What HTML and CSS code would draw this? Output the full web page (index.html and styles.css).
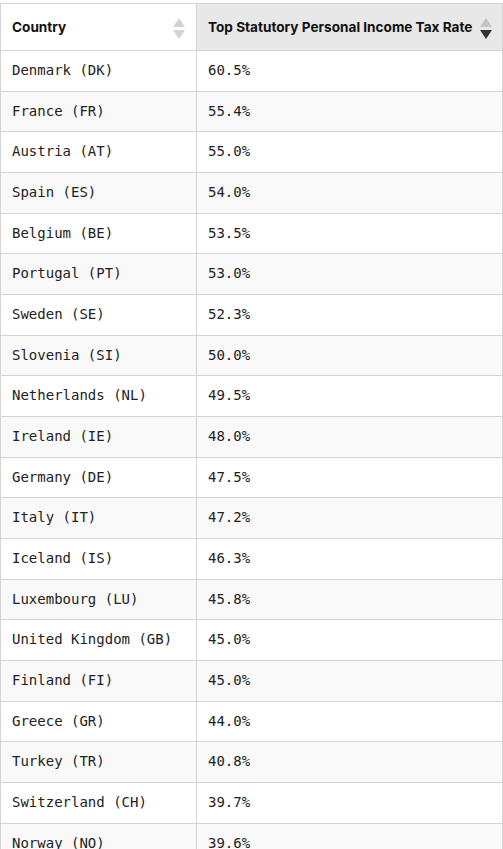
FILE: index.html
```html
<!DOCTYPE html>
<html lang="en">
<head>
  <meta charset="UTF-8">
  <meta name="viewport" content="width=device-width, initial-scale=1.0">
  <title>Top Statutory Personal Income Tax Rates</title>
  <link rel="stylesheet" href="styles.css">
</head>

<body>
  <table class="tax-table">
    <thead>
      <tr>
        <th class="sortable">
          <span>Country</span>
          <span class="sort-icon">
            <svg width="12" height="22" viewBox="0 0 12 22">
              <polygon points="6,0 12,9 0,9" fill="#d3d3d3"/>
              <polygon points="0,12 12,12 6,21" fill="#d3d3d3"/>
            </svg>
          </span>
        </th>
        <th class="sortable sorted">
          <span>Top Statutory Personal Income Tax Rate</span>
          <span class="sort-icon">
            <svg width="12" height="22" viewBox="0 0 12 22">
              <polygon points="6,0 12,9 0,9" fill="#c4c4c4"/>
              <polygon points="0,12 12,12 6,21" fill="#333333"/>
            </svg>
          </span>
        </th>
      </tr>
    </thead>
    <tbody>
      <tr><td>Denmark (DK)</td><td>60.5%</td></tr>
      <tr><td>France (FR)</td><td>55.4%</td></tr>
      <tr><td>Austria (AT)</td><td>55.0%</td></tr>
      <tr><td>Spain (ES)</td><td>54.0%</td></tr>
      <tr><td>Belgium (BE)</td><td>53.5%</td></tr>
      <tr><td>Portugal (PT)</td><td>53.0%</td></tr>
      <tr><td>Sweden (SE)</td><td>52.3%</td></tr>
      <tr><td>Slovenia (SI)</td><td>50.0%</td></tr>
      <tr><td>Netherlands (NL)</td><td>49.5%</td></tr>
      <tr><td>Ireland (IE)</td><td>48.0%</td></tr>
      <tr><td>Germany (DE)</td><td>47.5%</td></tr>
      <tr><td>Italy (IT)</td><td>47.2%</td></tr>
      <tr><td>Iceland (IS)</td><td>46.3%</td></tr>
      <tr><td>Luxembourg (LU)</td><td>45.8%</td></tr>
      <tr><td>United Kingdom (GB)</td><td>45.0%</td></tr>
      <tr><td>Finland (FI)</td><td>45.0%</td></tr>
      <tr><td>Greece (GR)</td><td>44.0%</td></tr>
      <tr><td>Turkey (TR)</td><td>40.8%</td></tr>
      <tr><td>Switzerland (CH)</td><td>39.7%</td></tr>
      <tr><td>Norway (NO)</td><td>39.6%</td></tr>
      <tr><td>Poland (PL)</td><td>36.0%</td></tr>
    </tbody>
  </table>
</body>
</html>
```

FILE: styles.css
```css
body {
  margin: 0;
  padding: 3px 0 0;
  background-color: #ffffff;
  font-family: 'Inter', 'Roboto', 'Liberation Sans', sans-serif;
  color: #1a1a1a;
}

.tax-table {
  width: 503px;
  border-collapse: collapse;
  border: 1px solid #d4d4d4;
}

.tax-table th,
.tax-table td {
  border: 1px solid #d4d4d4;
  text-align: left;
}

.tax-table th {
  height: 46px;
  padding: 0 11px;
  font-size: 13.6px;
  font-weight: bold;
  color: #111111;
  background-color: #ffffff;
  white-space: nowrap;
}

.tax-table th.sortable {
  position: relative;
}

.tax-table th.sorted {
  background-color: #e8e8e8;
}

.sort-icon {
  position: absolute;
  right: 11px;
  top: 14px;
  line-height: 0;
}

.tax-table th.sorted .sort-icon {
  right: 10px;
}

.tax-table th:first-child {
  width: 173px;
}

.tax-table td {
  padding: 11px;
  font-family: 'DejaVu Sans Mono', 'Liberation Mono', monospace;
  font-size: 14px;
  line-height: 17.67px;
  color: #222222;
}

.tax-table tbody tr:nth-child(even) td {
  background-color: #f9f9f9;
}
```
